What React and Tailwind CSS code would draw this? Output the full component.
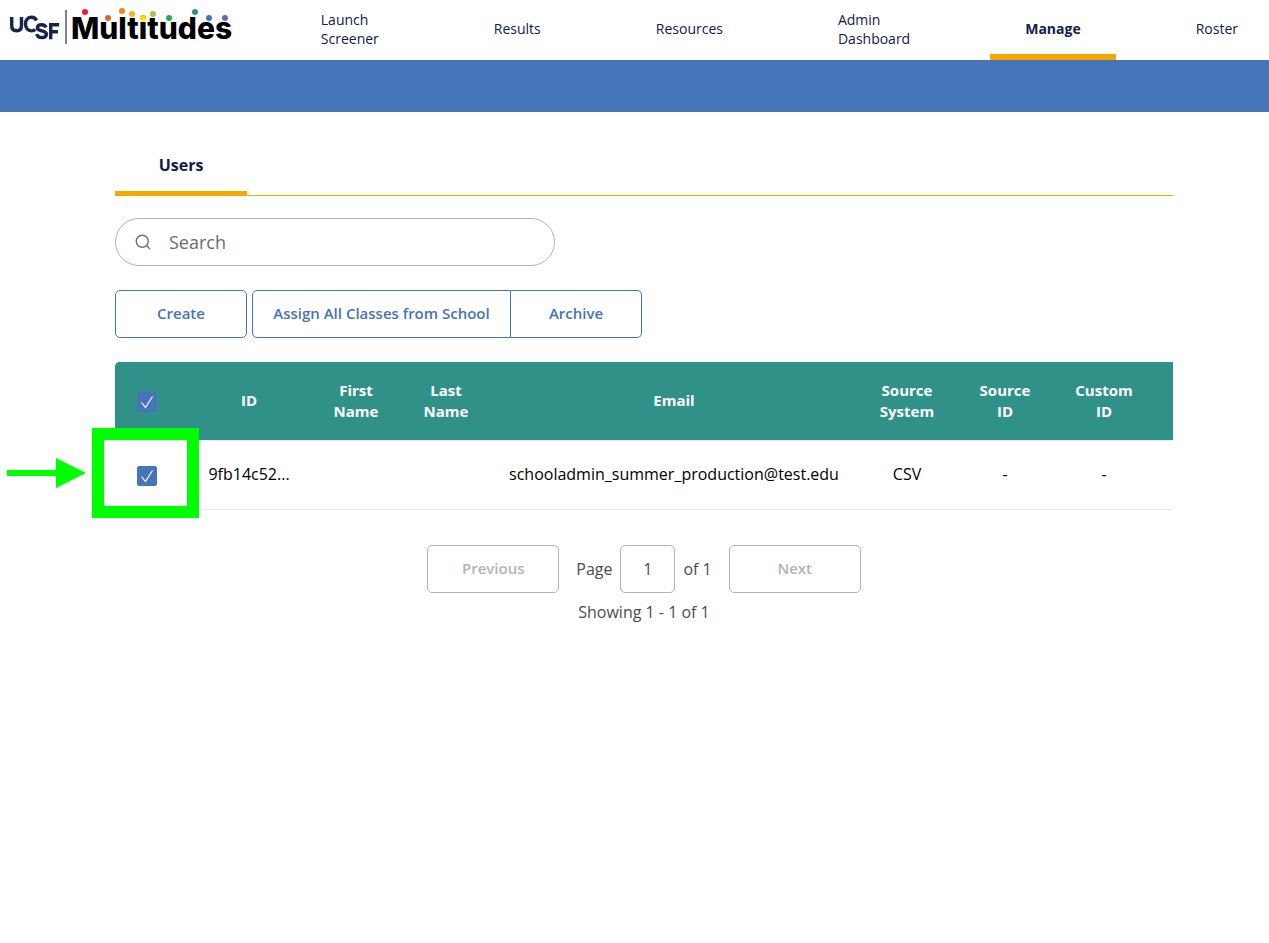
import { useState } from 'react'
import { Search } from 'lucide-react'

const navItems = ['Launch Screener', 'Results', 'Resources', 'Admin Dashboard', 'Manage', 'Roster']

const users = [
  {
    id: '9fb14c52...',
    firstName: '',
    lastName: '',
    email: 'schooladmin_summer_production@test.edu',
    sourceSystem: 'CSV',
    sourceId: '-',
    customId: '-'
  }
]

const dots = [
  [85, 12, '#ed1c2e'],
  [108, 18, '#f15a29'],
  [122, 11, '#f58220'],
  [132, 14, '#fbb01c'],
  [143, 18, '#ffde00'],
  [153, 14, '#a4c93d'],
  [169, 18, '#1cb14b'],
  [195, 12, '#2e9288'],
  [209, 18, '#3f76c4'],
  [225, 18, '#7560ab']
]

function Logo() {
  return (
    <svg width="240" height="56" viewBox="0 0 240 56" role="img" aria-label="UCSF Multitudes">
      <g fill="none" stroke="#16254c" strokeWidth="3.4">
        <path d="M11.7 17v8.500c0 3.600 1.700 5.300 4.900 5.300s4.900-1.700 4.900-5.300V17" />
        <path d="M36.500 20.500c-1-2.200-2.800-3.200-5-3.200-3.600 0-6 2.800-6 6.800s2.400 6.800 6 6.800c1.600 0 2.900-.5 3.800-1.500" />
        <path d="M46 27.500c-.6-1.900-2.100-2.800-4.400-2.800-2.500 0-4.200 1.100-4.200 3 0 4.500 9 2 9 6.600 0 2.100-1.800 3.300-4.500 3.300-2.900 0-4.700-1.300-5-3.600" />
        <path d="M50.700 39.200V24.800h8.500M50.700 31.700h7.300" />
      </g>
      <path d="M66 10v34" stroke="#58595b" strokeWidth="1.500" />
      <text x="71" y="39" fontSize="30" className="fill-black font-['Inter'] font-extrabold">
        Multitudes
      </text>
      {dots.map(([x, y, color]) => (
        <circle key={x} cx={x} cy={y} r="3" fill={color} />
      ))}
    </svg>
  )
}

function Checkbox({ label, checked, onChange }) {
  return (
    <span className="relative block size-5">
      <input
        type="checkbox"
        aria-label={label}
        checked={checked}
        onChange={onChange}
        className="block size-5 appearance-none rounded-xs border border-[#4674b8] bg-white checked:bg-[#4674b8]"
      />
      {checked && (
        <svg viewBox="0 0 20 20" className="pointer-events-none absolute inset-0 size-5" fill="none" stroke="white" strokeWidth="1.2">
          <path d="M4.500 10.500L8.500 15.500L15.500 4.500" />
        </svg>
      )}
    </span>
  )
}

// Highlight frame and arrow around the row checkbox
function Callout() {
  return (
    <div className="pointer-events-none absolute -top-[38px] -left-[45px] h-[90px] w-[107px] border-12 border-[#00ff00]">
      <svg width="80" height="30" viewBox="0 0 80 30" className="absolute top-[18px] -left-[97px]" fill="#00ff00">
        <path d="M0 12h49V0l30 15-30 15V18H0z" />
      </svg>
    </div>
  )
}

function App() {
  const [search, setSearch] = useState('')
  const [selected, setSelected] = useState(true)
  const [page, setPage] = useState('1')

  const toggle = () => setSelected(!selected)

  return (
    <div className="min-h-screen bg-white font-['Open_Sans',sans-serif] text-black">

      {/* Header */}
      <header className="flex h-[60px] items-stretch justify-between">
        <a href="#" className="shrink-0">
          <Logo />
        </a>
        <nav className="flex gap-[45px]">
          {navItems.map(item => (
            <a
              key={item}
              href="#"
              className={`flex items-center border-b-6 px-[35px] pt-[3px] text-sm leading-[19px] text-[#0f204b] last:pr-[31px] ${
                item === 'Manage' ? 'border-[#f7a800] font-bold' : 'border-transparent font-medium'
              }`}
            >
              <span className="w-min">{item}</span>
            </a>
          ))}
        </nav>
      </header>
      <div className="h-[52px] bg-[#4674b8]" />

      <main className="mr-24 ml-[115px] pt-7">

        {/* Tabs */}
        <div className="flex h-14 border-b border-[#f7a800]">
          <button className="-mb-px w-[132px] border-b-5 border-[#f7a800] pb-0.5 text-base font-bold text-[#0f204b]">
            Users
          </button>
        </div>

        <label className="mt-[22px] flex h-12 w-[440px] items-center gap-[17px] rounded-full border border-[#afb4c0] px-[18px]">
          <Search size={18} strokeWidth={1.75} className="shrink-0 text-[#6b6b76]" />
          <input
            type="text"
            aria-label="Search"
            value={search}
            onChange={e => setSearch(e.target.value)}
            placeholder="Search"
            className="w-full text-lg font-medium outline-none placeholder:text-[#6b6b76]"
          />
        </label>

        {/* Actions */}
        <div className="mt-6 flex h-12 gap-[5px] text-[15px] font-semibold text-[#4674b8]">
          <button className="w-[132px] rounded-[5px] border border-[#4674b8] pb-0.5">Create</button>
          <div className="flex">
            <button className="w-[259px] rounded-l-[5px] border border-[#4674b8] pb-0.5">Assign All Classes from School</button>
            <button className="w-[131px] rounded-r-[5px] border border-l-0 border-[#4674b8] pb-0.5">Archive</button>
          </div>
        </div>

        {/* Users table */}
        <table className="mt-6 w-full table-fixed text-center leading-[21px]">
          <thead className="text-[15px] text-white">
            <tr className="h-[78px] bg-[#2f9187]">
              <th className="w-[72px] rounded-tl-[5px] bg-[#2f9187] pt-0.5 pl-[22px]">
                <Checkbox label="Select all users" checked={selected} onChange={toggle} />
              </th>
              <th className="w-[124px]">ID</th>
              <th className="w-[90px] px-4">First Name</th>
              <th className="w-[90px] px-4">Last Name</th>
              <th>Email</th>
              <th className="w-[100px] px-4">Source System</th>
              <th className="w-24 px-4">Source ID</th>
              <th className="w-[120px] pr-[34px] pl-4">Custom ID</th>
            </tr>
          </thead>
          <tbody className="text-base leading-[21px] font-medium">
            {users.map(user => (
              <tr key={user.id} className="h-[69px] border-y border-[#ebebeb]">
                <td className="pt-0.5 pl-[22px]">
                  <div className="relative size-5">
                    <Checkbox label={`Select ${user.email}`} checked={selected} onChange={toggle} />
                    <Callout />
                  </div>
                </td>
                <td>{user.id}</td>
                <td>{user.firstName}</td>
                <td>{user.lastName}</td>
                <td>{user.email}</td>
                <td>{user.sourceSystem}</td>
                <td>{user.sourceId}</td>
                <td className="pr-[18px]">{user.customId}</td>
              </tr>
            ))}
          </tbody>
        </table>

        {/* Pagination */}
        <div className="mt-[35px] flex items-center justify-center text-base font-medium text-[#4b4b55]">
          <button disabled className="h-12 w-[132px] rounded-[5px] border border-[#afb4c0] text-[15px] font-semibold text-[#afb4c0]">
            Previous
          </button>
          <label className="mx-[17px] flex items-center gap-2">
            Page
            <input
              type="text"
              value={page}
              onChange={e => setPage(e.target.value)}
              className="h-12 w-[55px] rounded-[5px] border border-[#afb4c0] text-center"
            />
            of 1
          </label>
          <button disabled className="h-12 w-[132px] rounded-[5px] border border-[#afb4c0] text-[15px] font-semibold text-[#afb4c0]">
            Next
          </button>
        </div>
        <p className="mt-[7px] text-center text-base font-medium text-[#4b4b55]">Showing 1 - 1 of 1</p>
      </main>
    </div>
  )
}

export default App
